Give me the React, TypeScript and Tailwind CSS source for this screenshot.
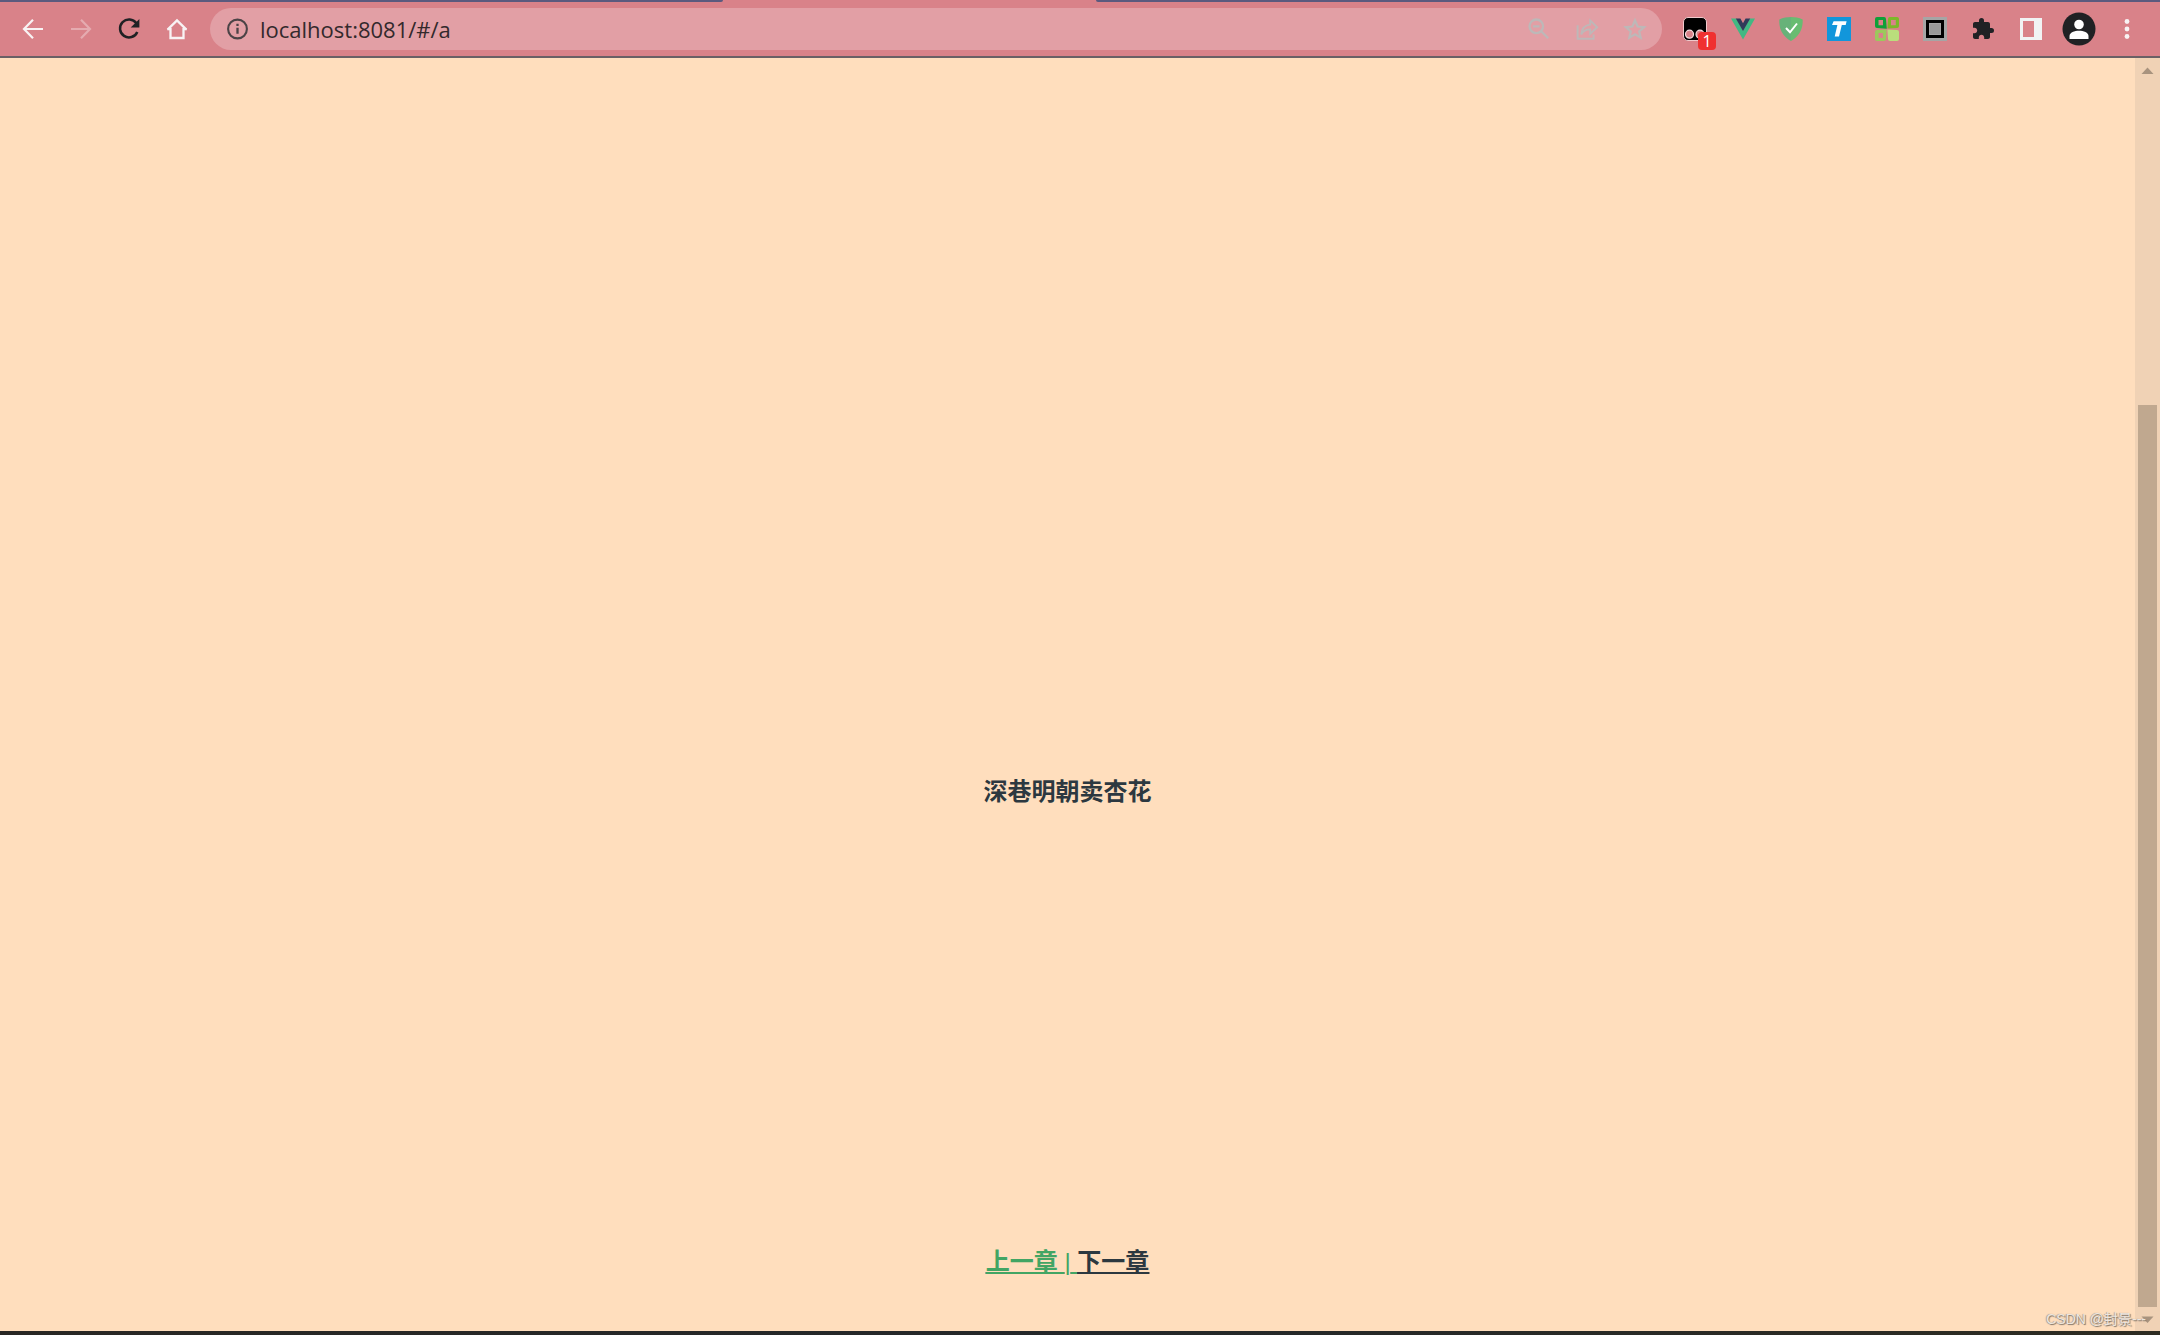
import type { ReactNode } from 'react';

function ToolbarButton({ label, children }: { label: string; children: ReactNode }) {
  return (
    <button type="button" aria-label={label} className="relative flex size-12 shrink-0 items-center justify-center">
      {children}
    </button>
  );
}

function NavButtons() {
  return (
    <nav className="flex pl-[9px]">
      <ToolbarButton label="Back">
        <svg viewBox="0 0 24 24" className="size-6" fill="none" stroke="#f8f3f4" strokeWidth="2.2">
          <path d="M22 12H4M12 2.8L3 12l9 9.2" />
        </svg>
      </ToolbarButton>
      <ToolbarButton label="Forward">
        <svg viewBox="0 0 24 24" className="size-6" fill="none" stroke="#e5abb0" strokeWidth="2.2">
          <path d="M2 12h18M12 2.8l9 9.2-9 9.2" />
        </svg>
      </ToolbarButton>
      <ToolbarButton label="Reload">
        <svg viewBox="0 0 24 24" className="size-6" fill="none">
          <path d="M19.4 6.2A9 9 0 1 0 20.3 15" stroke="#202124" strokeWidth="2.5" />
          <path d="M22.4 2v8.5h-8.7z" fill="#202124" />
        </svg>
      </ToolbarButton>
      <ToolbarButton label="Home">
        <svg viewBox="0 0 24 24" className="size-6" fill="none" stroke="#f8f3f4" strokeWidth="2.3">
          <path d="M2.6 12.6L12 3.4l9.4 9.2M2.2 12.2h3.3v8.8h13v-8.8h3.3" strokeLinejoin="miter" />
        </svg>
      </ToolbarButton>
    </nav>
  );
}

function AddressBar() {
  return (
    <div className="ml-[9px] flex h-[42px] min-w-0 flex-1 items-center rounded-full bg-[#e29fa5] pl-4">
      <svg viewBox="0 0 24 24" className="size-6 shrink-0 text-[#4b4346]" fill="none" stroke="currentColor">
        <circle cx="11.5" cy="12" r="9.4" strokeWidth="2.1" />
        <path d="M11.5 10.8v6M11.5 6.7v2.2" strokeWidth="2.3" />
      </svg>
      <input
        aria-label="Address"
        defaultValue="localhost:8081/#/a"
        className="mb-px ml-[10px] block min-w-0 flex-1 bg-transparent font-['Open_Sans','Noto_Sans',sans-serif] text-[22px] leading-8 text-[#33292c] outline-none"
      />
      <div className="flex pr-[3px]">
        <ToolbarButton label="Zoom">
          <svg viewBox="0 0 24 24" className="size-6" fill="none" stroke="#bdb8b8" strokeWidth="2.3">
            <circle cx="9.3" cy="9.3" r="6.8" />
            <path d="M14.2 14.2l7 7M6 9.3h6.6" />
          </svg>
        </ToolbarButton>
        <ToolbarButton label="Share">
          <svg viewBox="0 0 24 24" className="size-6" fill="none" stroke="#bdb8b8" strokeWidth="1.9">
            <path d="M2.6 8.2v13.6h16v-4.2" />
            <path d="M6.2 17.4c.6-5.6 3.4-9.4 9-9.8V3.4l7 6.8-7 6.6v-4.4c-4-.1-6.7 1.3-9 5z" />
          </svg>
        </ToolbarButton>
        <ToolbarButton label="Bookmark">
          <svg viewBox="0 0 24 24" className="size-6" fill="none" stroke="#bdb8b8" strokeWidth="2.2">
            <path d="M12 3.4l2.6 6.1 6.6.6-5 4.3 1.5 6.4-5.7-3.4-5.7 3.4 1.5-6.4-5-4.3 6.6-.6z" />
          </svg>
        </ToolbarButton>
      </div>
    </div>
  );
}

function Extensions() {
  return (
    <div className="ml-[9px] flex pr-[9px]">
      <ToolbarButton label="Tampermonkey">
        <svg viewBox="0 0 24 24" className="size-6">
          <rect x=".5" y=".5" width="23" height="23" rx="4.5" fill="#000" stroke="#f0c9cc" />
          <circle cx="6.5" cy="17.2" r="4" fill="#d98289" stroke="#f3dfe0" strokeWidth="1.2" />
          <circle cx="17" cy="17.2" r="4" fill="#d98289" stroke="#f3dfe0" strokeWidth="1.2" />
        </svg>
        <span className="absolute top-[27px] left-[27px] flex size-[18px] items-center justify-center rounded-sm bg-[#f03030] font-['Open_Sans',sans-serif] text-base leading-[18px] text-white">
          1
        </span>
      </ToolbarButton>
      <ToolbarButton label="Vue Devtools">
        <svg viewBox="0 0 24 24" className="size-6">
          <path d="M0 1.6h5.2L12 13.4l6.8-11.8H24L12 22.4z" fill="#42b883" />
          <path d="M4.8 1.6h4.6L12 6.2l2.6-4.6h4.6L12 14z" fill="#2f3a5a" />
        </svg>
      </ToolbarButton>
      <ToolbarButton label="AdGuard">
        <svg viewBox="0 0 24 24" className="size-6">
          <path d="M12 0C8.4 0 4 .7.3 2.5.3 6.7 0 17.2 12 24z" fill="#67b279" />
          <path d="M12 0c3.6 0 8 .7 11.7 2.5 0 4.2.3 14.7-11.7 21.5z" fill="#68bc71" />
          <path d="M7 11l4 4.300L18 6.500" fill="none" stroke="#fff" strokeWidth="2" />
        </svg>
      </ToolbarButton>
      <ToolbarButton label="Translate">
        <svg viewBox="0 0 24 24" className="size-6">
          <path d="M0 0h24v24H0z" fill="#1296db" />
          <path d="M6.6 4.3h13l-.9 3.8h-3.9L12 19.6H7.7l2.7-11.5H5z" fill="#fff" />
        </svg>
      </ToolbarButton>
      <ToolbarButton label="Clover">
        <svg viewBox="0 0 24 24" className="size-6">
          <path fillRule="evenodd" d="M2 0h7q2 0 2 2l.8 9.8L2 11Q0 11 0 9V2q0-2 2-2zM3.500 3v5.200H8V3z" fill="#0fa038" />
          <path fillRule="evenodd" d="M15 0h7q2 0 2 2v7q0 2-2 2l-9.6.6L13 2q0-2 2-2zM16 3v5.200h4.800V3z" fill="#7cb928" />
          <path fillRule="evenodd" d="M2 13l9.6-.6L11 22q0 2-2 2H2q-2 0-2-2v-7q0-2 2-2zM3.500 16v5H8v-5z" fill="#9bc95c" />
          <path d="M12.4 12.4L22 13q2 0 2 2v7q0 2-2 2h-7q-2 0-2-2z" fill="#bade7c" />
        </svg>
      </ToolbarButton>
      <ToolbarButton label="Frame">
        <svg viewBox="0 0 24 24" className="size-6">
          <path d="M0 0h24v24H0z" fill="#a5a5a5" />
          <path d="M3 3h18v18H3z" fill="#000" />
          <path d="M6 6h12v12H6z" fill="#a5a5a5" />
          <path d="M7 7h10v10H7z" fill="#999" />
        </svg>
      </ToolbarButton>
      <ToolbarButton label="Extensions">
        <svg viewBox="0 0 24 24" className="size-6" fill="#202124">
          <path d="M20.5 11H19V7c0-1.1-.9-2-2-2h-4V3.500a2.500 2.500 0 0 0-5 0V5H4c-1.100 0-1.990.9-1.990 2v3.800H3.500c1.490 0 2.700 1.210 2.700 2.700s-1.210 2.700-2.700 2.700H2V20c0 1.100.9 2 2 2h3.800v-1.500c0-1.490 1.210-2.700 2.700-2.700s2.700 1.210 2.700 2.700V22H17c1.100 0 2-.9 2-2v-4h1.500a2.500 2.500 0 0 0 0-5z" />
        </svg>
      </ToolbarButton>
      <ToolbarButton label="Side panel">
        <svg viewBox="0 0 24 24" className="size-6">
          <path fillRule="evenodd" d="M1 1h22v22H1zM4 4v16h11V4z" fill="#f1f3f4" />
        </svg>
      </ToolbarButton>
      <ToolbarButton label="Profile">
        <svg viewBox="0 0 34 34" className="size-[34px]">
          <circle cx="17" cy="17" r="16.5" fill="#202124" />
          <circle cx="17" cy="12.5" r="4.8" fill="#fff" />
          <path d="M7.5 27v-3c0-3.5 5-5.2 9.5-5.2s9.5 1.7 9.5 5.2v3z" fill="#fff" />
        </svg>
      </ToolbarButton>
      <ToolbarButton label="Menu">
        <svg viewBox="0 0 24 24" className="size-6" fill="#f8f3f4">
          <circle cx="12" cy="4.5" r="2.4" />
          <circle cx="12" cy="12" r="2.4" />
          <circle cx="12" cy="19.5" r="2.4" />
        </svg>
      </ToolbarButton>
    </div>
  );
}

function Scrollbar() {
  return (
    <div className="flex w-[25px] flex-col items-center bg-[#f0d2b5]">
      <svg viewBox="0 0 25 25" className="h-[25px] w-full shrink-0" fill="#a8937e">
        <path d="M12.5 9.5l6 6.5h-12z" />
      </svg>
      <div className="flex w-[19px] flex-1 flex-col">
        <div className="flex-[322]" />
        <div className="flex-[902] bg-[#c0a88f]" />
      </div>
      <svg viewBox="0 0 25 24" className="h-6 w-full shrink-0" fill="#a8937e">
        <path d="M12.5 16l6-6.5h-12z" />
      </svg>
    </div>
  );
}

export default function App() {
  return (
    <div className="flex h-screen flex-col overflow-hidden bg-[#ffdebd]">
      <header className="shrink-0 border-b-2 border-[#6a6065] bg-[#d98289]">
        {/* bottom edge of the tab strip, open under the active tab */}
        <div className="flex h-[2px]">
          <div className="flex-[723] rounded-br-sm bg-[#5b5a7e]" />
          <div className="flex-[373]" />
          <div className="flex-[1064] rounded-bl-sm bg-[#5b5a7e]" />
        </div>
        <div className="flex h-[54px] items-center">
          <NavButtons />
          <AddressBar />
          <Extensions />
        </div>
      </header>

      <div className="relative flex min-h-0 flex-1">
        <main className="flex flex-1 flex-col items-center justify-end pb-[53px] text-center font-['Liberation_Sans','Noto_Sans_CJK_SC',sans-serif] text-2xl leading-8 font-bold text-[#2c3840]">
          <p className="mb-[438px]">深巷明朝卖杏花</p>
          <nav className="whitespace-pre underline">
            <a href="#/" className="text-[#42a564]">
              上一章 <span className="font-normal">|</span>{' '}
            </a>
            <a href="#/b">下一章</a>
          </nav>
        </main>
        <Scrollbar />
        <span className="absolute right-[14px] bottom-[2px] font-['Liberation_Sans','Noto_Sans_CJK_SC',sans-serif] text-sm leading-5 text-[#eee6df] [text-shadow:1px_1px_1px_#807468,-1px_0_1px_#a89888]">
          CSDN @封景---
        </span>
      </div>

      <footer className="h-1 shrink-0 bg-linear-to-r from-[#292724] via-[#24282a] to-[#2e2c22]" />
    </div>
  );
}
